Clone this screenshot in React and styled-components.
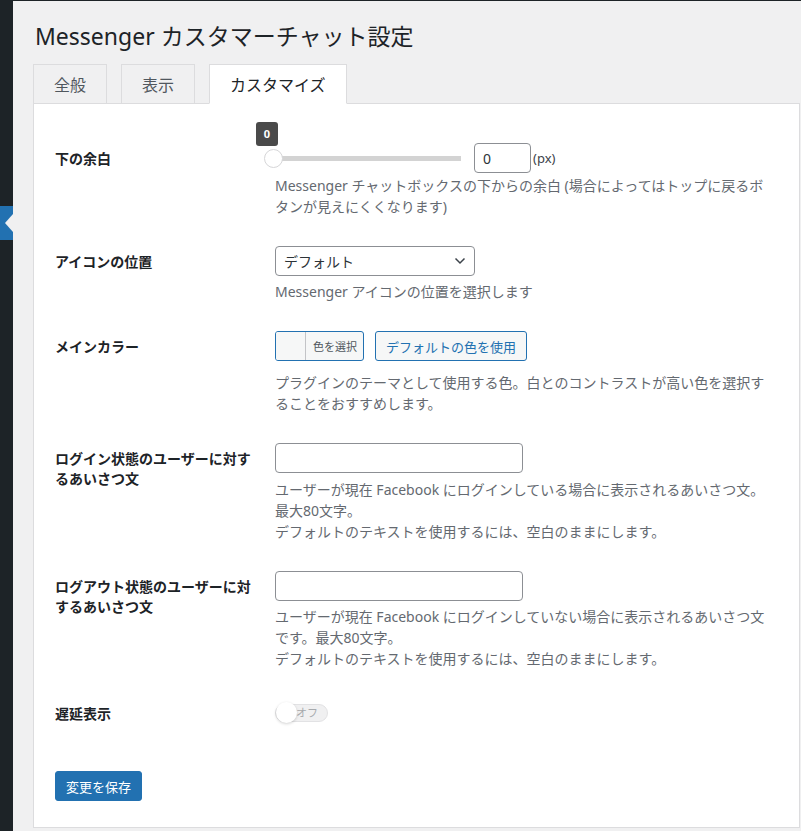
import React from 'react';
import styled, { createGlobalStyle } from 'styled-components';

const GlobalStyle = createGlobalStyle`
  html, body {
    margin: 0;
    padding: 0;
    background: #f0f0f1;
  }
  body {
    font-family: "Noto Sans", "Noto Sans CJK JP", sans-serif;
    font-size: 14px;
    color: #3c434a;
  }
  * {
    box-sizing: border-box;
  }
`;

const Page = styled.div`
  display: flex;
  min-height: 831px;
  border-top: 1px solid #1d2327;
`;

const Sidebar = styled.div`
  width: 13px;
  flex-shrink: 0;
  background: #1d2327;
  display: flex;
  flex-direction: column;
`;

const CurrentMenu = styled.div`
  margin-top: 205px;
  height: 34px;
  background: #2271b1;
  position: relative;

  &::after {
    content: '';
    position: absolute;
    right: 0;
    top: 8px;
    border-style: solid;
    border-width: 9px 8px 9px 0;
    border-color: transparent #f0f0f1 transparent transparent;
  }
`;

const Main = styled.div`
  flex: 1;
  padding: 0 1px 0 20px;
  min-width: 0;
`;

const Title = styled.h1`
  margin: 0;
  padding: 20px 0 0 2px;
  font-size: 23px;
  font-weight: 400;
  line-height: 30px;
  color: #1d2327;
`;

const TabBar = styled.div`
  display: flex;
  align-items: flex-end;
  gap: 14px;
  margin-top: 13px;
  position: relative;
  z-index: 1;
  margin-bottom: -1px;
`;

const Tab = styled.div`
  height: 40px;
  padding: 0 20px;
  display: flex;
  align-items: center;
  font-size: 16px;
  font-family: "Noto Sans CJK JP", sans-serif;
  border: 1px solid #dcdcde;
  border-bottom-color: ${p => (p.$active ? '#fff' : '#dcdcde')};
  background: ${p => (p.$active ? '#fff' : '#f0f0f1')};
  color: ${p => (p.$active ? '#1d2327' : '#50575e')};
  cursor: pointer;
`;

const Panel = styled.div`
  background: #fff;
  border: 1px solid #dcdcde;
  padding: 24px 21px 26px;
`;

const Row = styled.div`
  display: grid;
  grid-template-columns: 220px 1fr;
  padding: 15px 0 14px;
`;

const Label = styled.div`
  padding-top: 5px;
  font-size: 14px;
  font-weight: 600;
  line-height: 20px;
  color: #1d2327;
  font-family: "Noto Sans CJK JP", sans-serif;
`;

const Field = styled.div`
  display: flex;
  flex-direction: column;
  align-items: flex-start;
  min-width: 0;
`;

const Description = styled.p`
  margin: ${p => p.$gap || 5}px 0 0;
  font-size: 14px;
  line-height: 21px;
  color: #646970;
  white-space: nowrap;
`;

const SliderLine = styled.div`
  display: flex;
  align-items: center;
  height: 30px;
`;

const Track = styled.div`
  position: relative;
  width: 186px;
  height: 5px;
  background: #d3d3d3;
  margin-right: 13px;
`;

const Handle = styled.div`
  position: absolute;
  left: -11px;
  top: -7px;
  width: 19px;
  height: 19px;
  border-radius: 50%;
  background: #fff;
  border: 1px solid #d6d6d8;
`;

const Bubble = styled.div`
  position: absolute;
  left: -19px;
  top: -34px;
  width: 22px;
  height: 24px;
  border-radius: 3px;
  background: #4a4a4a;
  color: #fff;
  font-size: 11px;
  font-weight: 700;
  display: flex;
  align-items: center;
  justify-content: center;
`;

const TextInput = styled.input`
  width: ${p => p.$width || 248}px;
  height: 30px;
  padding: 0 8px;
  border: 1px solid #8c8f94;
  border-radius: 4px;
  background: #fff;
  font-family: "Noto Sans", "Noto Sans CJK JP", sans-serif;
  font-size: 14px;
  color: #2c3338;
  outline: none;
`;

const Unit = styled.span`
  margin-left: 2px;
  font-size: 13px;
  color: #3c434a;
`;

const SelectWrap = styled.div`
  position: relative;
  width: 200px;
  height: 30px;
`;

const Select = styled.select`
  appearance: none;
  width: 100%;
  height: 100%;
  padding: 0 24px 0 8px;
  border: 1px solid #8c8f94;
  border-radius: 4px;
  background: #fff;
  font-family: "Noto Sans CJK JP", sans-serif;
  font-size: 14px;
  color: #2c3338;
`;

const Chevron = styled.svg`
  position: absolute;
  right: 8px;
  top: 9px;
  pointer-events: none;
`;

const ButtonGroup = styled.div`
  display: flex;
  gap: 11px;
`;

const ColorButton = styled.button`
  display: flex;
  align-items: stretch;
  height: 30px;
  padding: 0;
  border: 1px solid #2271b1;
  border-radius: 3px;
  background: #f6f7f7;
  overflow: hidden;
  cursor: pointer;
`;

const Swatch = styled.span`
  width: 30px;
  border-right: 1px solid #c3c4c7;
  background: #f6f7f7;
`;

const ColorText = styled.span`
  display: flex;
  align-items: center;
  padding: 0 6px 0 7px;
  font-family: "Noto Sans CJK JP", sans-serif;
  font-size: 11px;
  color: #50575e;
`;

const SecondaryButton = styled.button`
  height: 30px;
  padding: 0 10px;
  border: 1px solid #2271b1;
  border-radius: 3px;
  background: #f6f7f7;
  color: #2271b1;
  font-family: "Noto Sans CJK JP", sans-serif;
  font-size: 13px;
  cursor: pointer;
`;

const ToggleBox = styled.div`
  height: 29px;
  display: flex;
  align-items: center;
`;

const Toggle = styled.div`
  position: relative;
  width: 53px;
  height: 18px;
  border-radius: 9px;
  background: #f0f0f1;
  border: 1px solid #e2e2e4;
  display: flex;
  align-items: center;
  justify-content: flex-end;
  padding-right: 9px;
`;

const Knob = styled.span`
  position: absolute;
  left: 0px;
  top: -3px;
  width: 21px;
  height: 21px;
  border-radius: 50%;
  background: #fff;
  box-shadow: 0 1px 3px rgba(0, 0, 0, 0.18);
`;

const ToggleText = styled.span`
  font-family: "Noto Sans CJK JP", sans-serif;
  font-size: 11px;
  color: #a7aaad;
  line-height: 1;
`;

const Submit = styled.div`
  margin-top: 30px;
`;

const PrimaryButton = styled.button`
  height: 30px;
  padding: 0 10px;
  border: 1px solid #2271b1;
  border-radius: 3px;
  background: #2271b1;
  color: #fff;
  font-family: "Noto Sans CJK JP", sans-serif;
  font-size: 13px;
  cursor: pointer;
`;

const tabs = ['全般', '表示', 'カスタマイズ'];

export default function App() {
  return (
    <>
      <GlobalStyle />
      <Page>
        <Sidebar>
          <CurrentMenu />
        </Sidebar>
        <Main>
          <Title>Messenger カスタマーチャット設定</Title>
          <TabBar>
            {tabs.map((t, i) => (
              <Tab key={t} $active={i === 2}>{t}</Tab>
            ))}
          </TabBar>
          <Panel>
            <Row>
              <Label>下の余白</Label>
              <Field>
                <SliderLine>
                  <Track>
                    <Bubble>0</Bubble>
                    <Handle />
                  </Track>
                  <TextInput $width={57} defaultValue="0" />
                  <Unit>(px)</Unit>
                </SliderLine>
                <Description $gap={2}>
                  Messenger チャットボックスの下からの余白 (場合によってはトップに戻るボ
                  <br />
                  タンが見えにくくなります)
                </Description>
              </Field>
            </Row>

            <Row>
              <Label>アイコンの位置</Label>
              <Field>
                <SelectWrap>
                  <Select defaultValue="default">
                    <option value="default">デフォルト</option>
                  </Select>
                  <Chevron width="14" height="12" viewBox="0 0 14 12">
                    <polyline points="2.5,3.5 7,8 11.5,3.5" fill="none" stroke="#3c434a" strokeWidth="1.5" />
                  </Chevron>
                </SelectWrap>
                <Description>Messenger アイコンの位置を選択します</Description>
              </Field>
            </Row>

            <Row>
              <Label>メインカラー</Label>
              <Field>
                <ButtonGroup>
                  <ColorButton>
                    <Swatch />
                    <ColorText>色を選択</ColorText>
                  </ColorButton>
                  <SecondaryButton>デフォルトの色を使用</SecondaryButton>
                </ButtonGroup>
                <Description $gap={11}>
                  プラグインのテーマとして使用する色。白とのコントラストが高い色を選択す
                  <br />
                  ることをおすすめします。
                </Description>
              </Field>
            </Row>

            <Row>
              <Label>
                ログイン状態のユーザーに対す
                <br />
                るあいさつ文
              </Label>
              <Field>
                <TextInput />
                <Description $gap={6}>
                  ユーザーが現在 Facebook にログインしている場合に表示されるあいさつ文。
                  <br />
                  最大80文字。
                  <br />
                  デフォルトのテキストを使用するには、空白のままにします。
                </Description>
              </Field>
            </Row>

            <Row>
              <Label>
                ログアウト状態のユーザーに対
                <br />
                するあいさつ文
              </Label>
              <Field>
                <TextInput />
                <Description>
                  ユーザーが現在 Facebook にログインしていない場合に表示されるあいさつ文
                  <br />
                  です。最大80文字。
                  <br />
                  デフォルトのテキストを使用するには、空白のままにします。
                </Description>
              </Field>
            </Row>

            <Row>
              <Label>遅延表示</Label>
              <Field>
                <ToggleBox>
                  <Toggle>
                    <Knob />
                    <ToggleText>オフ</ToggleText>
                  </Toggle>
                </ToggleBox>
              </Field>
            </Row>

            <Submit>
              <PrimaryButton>変更を保存</PrimaryButton>
            </Submit>
          </Panel>
        </Main>
      </Page>
    </>
  );
}
